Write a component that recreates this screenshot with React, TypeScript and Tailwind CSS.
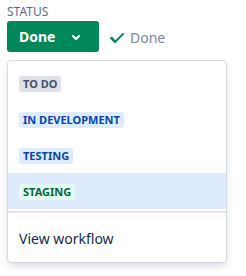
import React from 'react';

type Status = {
  label: string;
  bg: string;
  fg: string;
  selected?: boolean;
};

const statuses: Status[] = [
  { label: 'To do', bg: 'bg-[#dfe1e6]', fg: 'text-[#42526e]' },
  { label: 'In development', bg: 'bg-[#deebff]', fg: 'text-[#0747a6]' },
  { label: 'Testing', bg: 'bg-[#deebff]', fg: 'text-[#0747a6]' },
  { label: 'Staging', bg: 'bg-[#e3fcef]', fg: 'text-[#006644]', selected: true },
];

function ChevronDown() {
  return (
    <svg width="24" height="24" viewBox="0 0 24 24" className="shrink-0">
      <path
        fill="currentColor"
        fillRule="evenodd"
        d="M8.292 10.293a1.009 1.009 0 0 0 0 1.419l2.939 2.965c.218.215.5.322.779.322s.556-.107.769-.322l2.93-2.955a1.01 1.01 0 0 0 0-1.419.987.987 0 0 0-1.406 0l-2.298 2.317-2.307-2.327a.99.99 0 0 0-1.406 0z"
      />
    </svg>
  );
}

function Check() {
  return (
    <svg width="24" height="24" viewBox="0 0 24 24" className="shrink-0">
      <path
        fill="currentColor"
        fillRule="evenodd"
        d="M6.735 12.322a1 1 0 0 0-1.47 1.356l3.612 3.919c.537.526 1.337.526 1.834.03l.364-.359 3.939-3.883.04-.04 3.658-3.643a1 1 0 0 0-1.412-1.416l-3.65 3.634-.04.04-3.29 3.244-3.585-3.882z"
      />
    </svg>
  );
}

function Lozenge({ status }: { status: Status }) {
  return (
    <span
      className={`inline-flex h-[16px] items-center rounded-[3px] px-[4px] text-[11px] font-bold uppercase leading-[16px] ${status.bg} ${status.fg}`}
    >
      {status.label}
    </span>
  );
}

export default function App() {
  return (
    <div className="h-[276px] w-[246px] bg-white px-[7px] pt-[4px] font-['Noto_Sans',sans-serif]">
      <div className="text-[12px] leading-[16px] text-[#5e6c84]">STATUS</div>

      <div className="mt-[1px] flex items-center">
        <button className="flex h-[31px] w-[92px] items-center gap-[9px] rounded-[3px] bg-[#00875a] pl-[12px] text-[14px] font-bold text-white">
          <span>Done</span>
          <ChevronDown />
        </button>
        <div className="ml-[6px] flex items-center text-[14px] text-[#7a869a]">
          <span className="text-[#00875a]">
            <Check />
          </span>
          <span className="ml-[1px] mt-[1px]">Done</span>
        </div>
      </div>

      <div className="mt-[8px] w-[220px] rounded-[4px] border border-[#d5d9e0] bg-white shadow-[0_4px_8px_-2px_rgba(9,30,66,0.2)]">
        <div className="pt-[4px] pb-[2px]">
          {statuses.map((s) => (
            <div
              key={s.label}
              className={`flex h-[36px] items-start px-[11px] pt-[11px] ${s.selected ? 'bg-[#deebff]' : ''}`}
            >
              <Lozenge status={s} />
            </div>
          ))}
        </div>
        <div className="border-t-2 border-[#e4e6ea] px-[11px] pt-[16px] pb-[13px] text-[14px] leading-[20px] text-[#172b4d]">
          View workflow
        </div>
      </div>
    </div>
  );
}
